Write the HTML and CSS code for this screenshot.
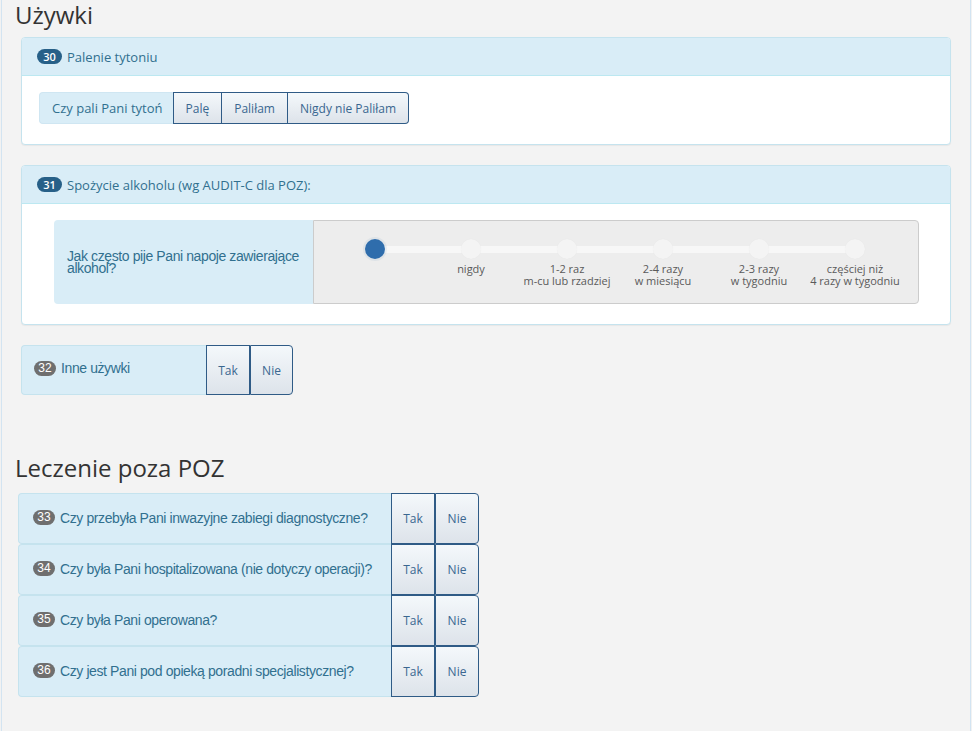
FILE: index.html
```html
<!DOCTYPE html>
<html lang="pl">
<head>
<meta charset="utf-8">
<title>Używki</title>
<link rel="stylesheet" href="styles.css">
</head>
<body>
<div class="page">
  <h2 class="section-title">Używki</h2>

  <div class="panel panel-first">
    <div class="panel-heading"><span class="badge badge-blue">30</span><span>Palenie tytoniu</span></div>
    <div class="panel-body body-smoke">
      <div class="input-group">
        <span class="addon">Czy pali Pani tytoń</span>
        <button class="btn">Palę</button>
        <button class="btn">Paliłam</button>
        <button class="btn btn-last">Nigdy nie Paliłam</button>
      </div>
    </div>
  </div>

  <div class="panel panel-second">
    <div class="panel-heading"><span class="badge badge-blue">31</span><span>Spożycie alkoholu (wg AUDIT-C dla POZ):</span></div>
    <div class="panel-body body-alc">
      <div class="slider-group">
        <div class="slider-label">Jak często pije Pani napoje zawierające alkohol?</div>
        <div class="slider-box">
          <div class="ticks">
            <div class="tick"><span class="handle handle-active"></span><span class="tick-label"></span></div>
            <div class="tick"><span class="handle"></span><span class="tick-label">nigdy</span></div>
            <div class="tick"><span class="handle"></span><span class="tick-label">1-2 raz<br>m-cu lub rzadziej</span></div>
            <div class="tick"><span class="handle"></span><span class="tick-label">2-4 razy<br>w miesiącu</span></div>
            <div class="tick"><span class="handle"></span><span class="tick-label">2-3 razy<br>w tygodniu</span></div>
            <div class="tick"><span class="handle"></span><span class="tick-label">częściej niż<br>4 razy w tygodniu</span></div>
          </div>
        </div>
      </div>
    </div>
  </div>

  <div class="yn yn-32">
    <div class="yn-label"><span class="badge badge-gray">32</span><span>Inne używki</span></div>
    <button class="btn btn-yn">Tak</button>
    <button class="btn btn-yn btn-last">Nie</button>
  </div>

  <h2 class="section-title title-second">Leczenie poza POZ</h2>

  <div class="yn-list">
    <div class="yn yn-row">
      <div class="yn-label"><span class="badge badge-gray">33</span><span>Czy przebyła Pani inwazyjne zabiegi diagnostyczne?</span></div>
      <button class="btn btn-yn">Tak</button>
      <button class="btn btn-yn btn-last">Nie</button>
    </div>
    <div class="yn yn-row">
      <div class="yn-label"><span class="badge badge-gray">34</span><span>Czy była Pani hospitalizowana (nie dotyczy operacji)?</span></div>
      <button class="btn btn-yn">Tak</button>
      <button class="btn btn-yn btn-last">Nie</button>
    </div>
    <div class="yn yn-row">
      <div class="yn-label"><span class="badge badge-gray">35</span><span>Czy była Pani operowana?</span></div>
      <button class="btn btn-yn">Tak</button>
      <button class="btn btn-yn btn-last">Nie</button>
    </div>
    <div class="yn yn-row">
      <div class="yn-label"><span class="badge badge-gray">36</span><span>Czy jest Pani pod opieką poradni specjalistycznej?</span></div>
      <button class="btn btn-yn">Tak</button>
      <button class="btn btn-yn btn-last">Nie</button>
    </div>
  </div>
</div>
</body>
</html>
```

FILE: styles.css
```css
* { box-sizing: border-box; }

html, body {
  margin: 0;
  padding: 0;
  background: #f2f2f2;
}

body {
  font-family: "Open Sans", "Liberation Sans", sans-serif;
  color: #333;
}

.page {
  margin-left: 1px;
  width: 970px;
  min-height: 731px;
  border-left: 1px solid #d3e4f1;
  border-right: 1px solid #d3e4f1;
  background: #f3f3f3;
  padding-bottom: 30px;
}

.section-title {
  margin: 0;
  padding-left: 13px;
  font-size: 24px;
  font-weight: 400;
  line-height: 30px;
  color: #333;
}

.title-second {
  margin-top: 58px;
}

/* panels */
.panel {
  margin: 7px 19px 0 19px;
  background: #fff;
  border: 1px solid #c5e3ee;
  border-radius: 4px;
  box-shadow: 0 1px 1px rgba(0,0,0,0.05);
}

.panel-second {
  margin-top: 20px;
}

.panel-heading {
  display: flex;
  align-items: center;
  gap: 5px;
  height: 38px;
  padding: 0 15px;
  background: #d9edf7;
  border-bottom: 1px solid #bce8f1;
  border-radius: 3px 3px 0 0;
  font-size: 13px;
  color: #31708f;
}

.badge {
  display: inline-flex;
  align-items: center;
  justify-content: center;
  height: 15px;
  min-width: 24px;
  padding: 0 5px;
  border-radius: 8px;
  color: #fff;
  font-family: "Liberation Sans", Arial, sans-serif;
  font-size: 12px;
  line-height: 15px;
}

.badge-blue {
  background: #276088;
  font-family: "Open Sans", sans-serif;
  font-size: 11px;
  font-weight: 600;
  min-width: 25px;
}

.badge-gray {
  background: #6f6f6f;
  min-width: 22px;
  padding: 0 4px;
}

.panel-body.body-smoke {
  padding: 16px 17px 20px 17px;
}

.panel-body.body-alc {
  padding: 16px 31px 20px 32px;
}

/* input group */
.input-group {
  display: flex;
  height: 32px;
}

.addon {
  display: flex;
  align-items: center;
  padding: 0 10px 0 12px;
  background: #d9edf7;
  border: 1px solid #cfe6f2;
  border-right: none;
  border-radius: 4px 0 0 4px;
  font-size: 13px;
  color: #31708f;
}

.btn {
  display: flex;
  align-items: center;
  justify-content: center;
  margin: 0;
  padding: 0 12px;
  font-family: "Open Sans", sans-serif;
  font-size: 12px;
  color: #3a6790;
  background: linear-gradient(#f4f8fb, #dde3ea);
  border: 1px solid #2f5b86;
  border-left: none;
  cursor: pointer;
}

.input-group .btn:nth-child(2) {
  border-left: 1px solid #2f5b86;
}

.btn-last {
  border-radius: 0 4px 4px 0;
}

/* slider */
.slider-group {
  display: flex;
  height: 84px;
}

.slider-label {
  width: 259px;
  display: flex;
  align-items: center;
  padding: 0 14px 0 13px;
  background: #d9edf7;
  border-radius: 4px 0 0 4px;
  font-family: "Liberation Sans", Arial, sans-serif;
  font-size: 14px;
  letter-spacing: -0.4px;
  line-height: 12px;
  color: #31708f;
}

.slider-box {
  flex: 1;
  background: #ededed;
  border: 1px solid #cccccc;
  border-radius: 0 4px 4px 0;
  padding: 18px 0 0 13px;
}

.ticks {
  position: relative;
  display: flex;
}

.ticks::before {
  content: "";
  position: absolute;
  left: 48px;
  width: 480px;
  top: 7px;
  height: 7px;
  background: #f7f7f7;
  border-radius: 3px;
}

.tick {
  position: relative;
  width: 96px;
  display: flex;
  flex-direction: column;
  align-items: center;
}

.handle {
  width: 20px;
  height: 20px;
  border-radius: 50%;
  background: #f4f4f4;
  box-shadow: 0 0 1px rgba(0,0,0,0.06);
}

.handle-active {
  background: #2f6dac;
  box-shadow: 0 0 0 2px rgba(47,109,172,0.08);
}

.tick-label {
  margin-top: 4px;
  font-size: 11px;
  line-height: 11.5px;
  color: #5a5a5a;
  text-align: center;
  white-space: nowrap;
}

/* yes / no rows */
.yn {
  display: flex;
  height: 50px;
}

.yn-32 {
  margin: 20px 0 0 19px;
  width: 272px;
}

.yn-label {
  flex: 1;
  display: flex;
  align-items: center;
  gap: 5px;
  padding: 0 10px 2px 12px;
  background: #d9edf7;
  border: 1px solid #c5e3ee;
  border-right: none;
  border-radius: 4px 0 0 4px;
  font-family: "Liberation Sans", Arial, sans-serif;
  font-size: 14px;
  letter-spacing: -0.4px;
  color: #31708f;
}

.yn-32 .yn-label {
  padding-bottom: 4px;
}

.yn-label .badge {
  letter-spacing: 0;
}

.btn-yn {
  width: 44px;
  padding: 0;
  height: 100%;
  border-left: 1px solid #2f5b86;
}

.btn-yn.btn-last {
  width: 43px;
  border-left: 1px solid #2f5b86;
}

.yn-list {
  margin: 10px 0 0 16px;
  width: 461px;
}

.yn-row {
  height: 51px;
}

.yn-row .yn-label {
  padding-left: 14px;
}

.yn-row .btn-yn.btn-last {
  width: 44px;
}
```
